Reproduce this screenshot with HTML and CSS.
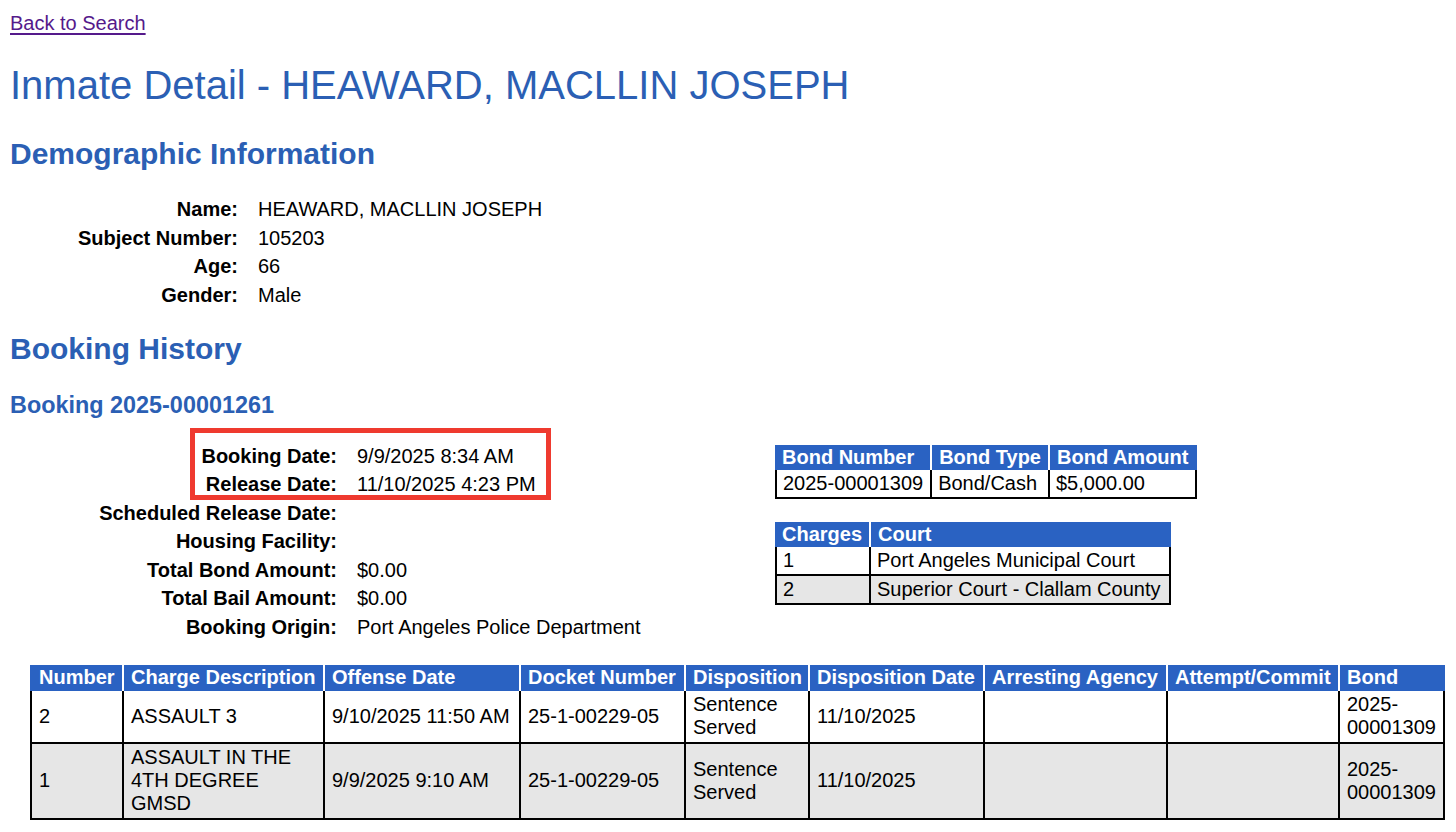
FILE: index.html
```html
<!DOCTYPE html>
<html lang="en">
<head>
<meta charset="utf-8">
<title>Inmate Detail - HEAWARD, MACLLIN JOSEPH</title>
<link rel="stylesheet" href="styles.css">
</head>
<body>
<div class="page">
  <a class="back" href="#">Back to Search</a>
  <h1 class="title">Inmate Detail - HEAWARD, MACLLIN JOSEPH</h1>

  <h2 class="section demo-title">Demographic Information</h2>
  <dl class="fields demo">
    <dt>Name:</dt><dd>HEAWARD, MACLLIN JOSEPH</dd>
    <dt>Subject Number:</dt><dd>105203</dd>
    <dt>Age:</dt><dd>66</dd>
    <dt>Gender:</dt><dd>Male</dd>
  </dl>

  <h2 class="section history-title">Booking History</h2>
  <h3 class="booking-title">Booking 2025-00001261</h3>

  <div class="booking-body">
    <dl class="fields booking">
      <dt>Booking Date:</dt><dd>9/9/2025 8:34 AM</dd>
      <dt>Release Date:</dt><dd>11/10/2025 4:23 PM</dd>
      <dt>Scheduled Release Date:</dt><dd></dd>
      <dt>Housing Facility:</dt><dd></dd>
      <dt>Total Bond Amount:</dt><dd>$0.00</dd>
      <dt>Total Bail Amount:</dt><dd>$0.00</dd>
      <dt>Booking Origin:</dt><dd>Port Angeles Police Department</dd>
    </dl>
    <div class="side">
      <table class="grid small bond">
        <thead>
          <tr><th>Bond Number</th><th>Bond Type</th><th>Bond Amount</th></tr>
        </thead>
        <tbody>
          <tr><td>2025-00001309</td><td>Bond/Cash</td><td>$5,000.00</td></tr>
        </tbody>
      </table>
      <table class="grid small courts">
        <thead>
          <tr><th>Charges</th><th>Court</th></tr>
        </thead>
        <tbody>
          <tr><td>1</td><td>Port Angeles Municipal Court</td></tr>
          <tr class="alt"><td>2</td><td>Superior Court - Clallam County</td></tr>
        </tbody>
      </table>
    </div>
    <div class="highlight"></div>
  </div>

  <table class="grid charges">
    <colgroup>
      <col class="c-num"><col class="c-desc"><col class="c-off"><col class="c-dock"><col class="c-disp"><col class="c-dispdate"><col class="c-agency"><col class="c-att"><col class="c-bond">
    </colgroup>
    <thead>
      <tr>
        <th>Number</th><th>Charge Description</th><th>Offense Date</th><th>Docket Number</th><th>Disposition</th><th>Disposition Date</th><th>Arresting Agency</th><th>Attempt/Commit</th><th>Bond</th>
      </tr>
    </thead>
    <tbody>
      <tr>
        <td>2</td><td>ASSAULT 3</td><td>9/10/2025 11:50 AM</td><td>25-1-00229-05</td><td>Sentence Served</td><td>11/10/2025</td><td></td><td></td><td>2025-00001309</td>
      </tr>
      <tr class="alt">
        <td>1</td><td>ASSAULT IN THE 4TH DEGREE GMSD</td><td>9/9/2025 9:10 AM</td><td>25-1-00229-05</td><td>Sentence Served</td><td>11/10/2025</td><td></td><td></td><td>2025-00001309</td>
      </tr>
    </tbody>
  </table>
</div>
</body>
</html>
```

FILE: styles.css
```css
* {
  box-sizing: border-box;
}

html,
body {
  margin: 0;
  padding: 0;
  background: #ffffff;
}

body {
  font-family: "Liberation Sans", Arial, Helvetica, sans-serif;
  font-size: 20px;
  color: #000000;
}

.page {
  padding: 10px;
}

.back {
  display: block;
  width: max-content;
  margin-top: 2px;
  color: #551a8b;
  text-decoration: underline;
  text-underline-offset: 3px;
  line-height: 23px;
}

.title {
  margin: 27px 0 0;
  font-size: 40px;
  font-weight: normal;
  line-height: 46px;
  color: #2b5fb4;
}

.section {
  margin: 0;
  font-size: 30px;
  font-weight: bold;
  line-height: 34px;
  color: #2b5fb4;
}

.demo-title {
  margin-top: 29px;
}

.history-title {
  margin-top: 23px;
}

.booking-title {
  margin: 26px 0 0;
  font-size: 23.4px;
  font-weight: bold;
  line-height: 27px;
  color: #2b5fb4;
}

.fields {
  display: grid;
  column-gap: 20px;
  margin: 0;
  line-height: 28.5px;
}

.fields dt {
  font-weight: bold;
  text-align: right;
}

.fields dd {
  margin: 0;
  min-height: 28.5px;
}

.demo {
  grid-template-columns: 228px auto;
  margin-top: 24px;
}

.booking {
  grid-template-columns: 327px auto;
}

.booking-body {
  position: relative;
  display: flex;
  align-items: flex-start;
  margin-top: 22.5px;
}

.booking-body .booking {
  flex: 0 0 765px;
}

.side {
  display: flex;
  flex-direction: column;
  align-items: flex-start;
  gap: 23px;
  margin-top: 3.5px;
}

.highlight {
  position: absolute;
  left: 180px;
  top: -14px;
  width: 361px;
  height: 72px;
  border: 5px solid #ef3a2f;
  pointer-events: none;
}

/* tables */
.grid {
  border-collapse: separate;
  border-spacing: 0;
}

.grid th {
  background: #2a62c2;
  color: #ffffff;
  font-weight: bold;
  text-align: left;
  padding: 1px 7px;
  line-height: 23px;
  border-left: 2px solid #ffffff;
  white-space: nowrap;
}

.grid th:first-child {
  border-left: 0;
  padding-left: 9px;
}

.grid td {
  padding: 2px 7px;
  line-height: 23px;
  border-left: 2px solid #000000;
  border-bottom: 2px solid #000000;
  vertical-align: middle;
  background: #ffffff;
}

.grid td:last-child {
  border-right: 2px solid #000000;
}

.grid tr.alt td {
  background: #e6e6e6;
}

.small th:first-child {
  padding-left: 7px;
}

.small td {
  white-space: nowrap;
  padding-left: 6px;
}

.small th:last-child,
.small td:last-child {
  padding-right: 9px;
}

.charges {
  table-layout: fixed;
  width: 1415px;
  margin: 24px 0 0 20px;
}

.charges th {
  padding-top: 1px;
  padding-bottom: 2px;
}

.charges td {
  padding-top: 2px;
  padding-bottom: 3px;
}

.c-num { width: 92px; }
.c-desc { width: 201px; }
.c-off { width: 196px; }
.c-dock { width: 165px; }
.c-disp { width: 124px; }
.c-dispdate { width: 175px; }
.c-agency { width: 183px; }
.c-att { width: 172px; }
.c-bond { width: 107px; }
```
